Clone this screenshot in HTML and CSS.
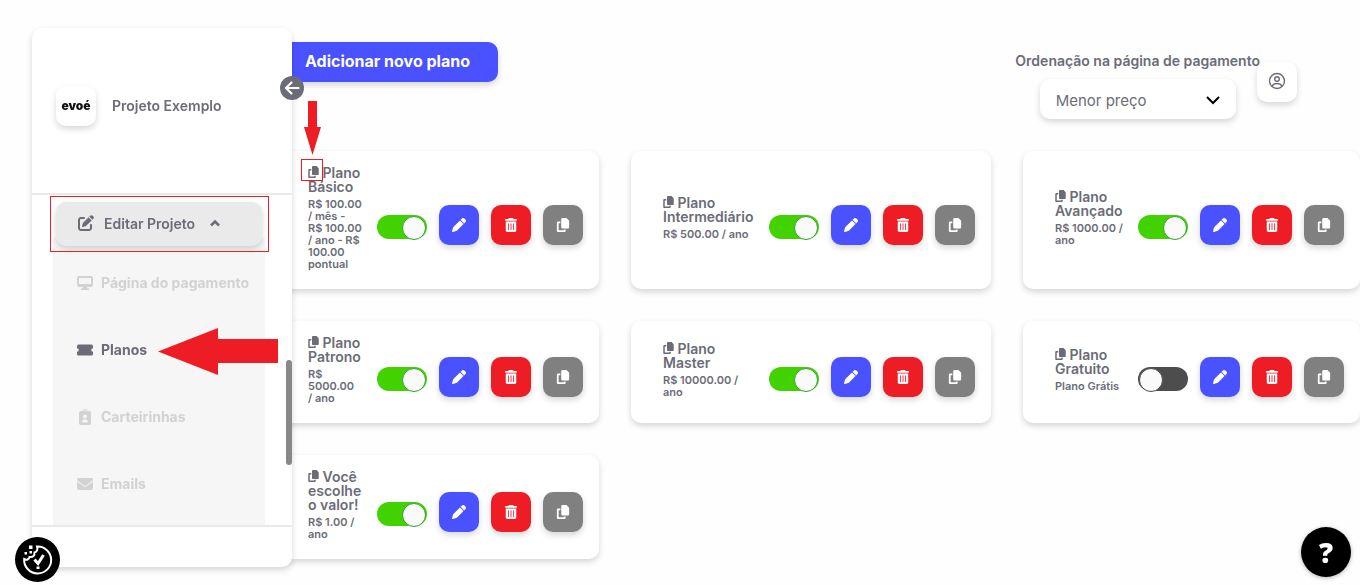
FILE: index.html
```html
<!DOCTYPE html>
<html lang="pt-BR">
<head>
  <meta charset="UTF-8">
  <meta name="viewport" content="width=device-width, initial-scale=1.0">
  <title>Planos</title>
  <link rel="stylesheet" href="styles.css">
</head>
<body>
  <!-- icones -->
  <svg class="sprite" aria-hidden="true">
    <symbol id="copy" viewBox="0 0 448 512"><path d="M208 0L332.1 0c12.7 0 24.9 5.1 33.9 14.1l67.9 67.9c9 9 14.1 21.2 14.1 33.9L448 336c0 26.5-21.5 48-48 48l-192 0c-26.5 0-48-21.5-48-48l0-288c0-26.5 21.5-48 48-48zM48 128l80 0 0 64-64 0 0 256 192 0 0-32 64 0 0 48c0 26.5-21.5 48-48 48L48 512c-26.5 0-48-21.5-48-48L0 176c0-26.5 21.5-48 48-48z"/></symbol>
    <symbol id="pen" viewBox="0 0 512 512"><path d="M362.7 19.3L314.3 67.7 444.3 197.7l48.4-48.4c25-25 25-65.5 0-90.5L453.3 19.3c-25-25-65.5-25-90.5 0zm-71 71L58.6 323.5c-10.4 10.4-18 23.3-22.2 37.4L1 481.2C-1.5 489.7 .8 498.8 7 505s15.3 8.5 23.7 6.1l120.3-35.4c14.1-4.2 27-11.8 37.4-22.2L421.7 220.3 291.7 90.3z"/></symbol>
    <symbol id="trash" viewBox="0 0 448 512"><path d="M135.2 17.7C140.6 6.8 151.7 0 163.8 0H284.2c12.1 0 23.2 6.8 28.6 17.7L320 32h96c17.7 0 32 14.3 32 32s-14.3 32-32 32H32C14.3 96 0 81.7 0 64S14.3 32 32 32h96l7.2-14.3zM32 128H416V448c0 35.3-28.7 64-64 64H96c-35.3 0-64-28.7-64-64V128zm96 64c-8.8 0-16 7.2-16 16V432c0 8.8 7.2 16 16 16s16-7.2 16-16V208c0-8.8-7.2-16-16-16zm96 0c-8.8 0-16 7.2-16 16V432c0 8.8 7.2 16 16 16s16-7.2 16-16V208c0-8.8-7.2-16-16-16zm96 0c-8.8 0-16 7.2-16 16V432c0 8.8 7.2 16 16 16s16-7.2 16-16V208c0-8.8-7.2-16-16-16z"/></symbol>
    <symbol id="edit" viewBox="0 0 512 512"><path d="M471.6 21.7c-21.9-21.9-57.3-21.9-79.2 0L362.3 51.7l97.9 97.9 30.1-30.1c21.9-21.9 21.9-57.3 0-79.2L471.6 21.7zm-299.2 220c-6.1 6.1-10.8 13.6-13.5 21.9l-29.6 88.8c-2.9 8.6-.6 18.1 5.8 24.6s15.9 8.7 24.6 5.8l88.8-29.6c8.2-2.7 15.7-7.4 21.9-13.5L437.7 172.3 339.7 74.3 172.4 241.7zM96 64C43 64 0 107 0 160V416c0 53 43 96 96 96H352c53 0 96-43 96-96V320c0-17.7-14.3-32-32-32s-32 14.3-32 32v96c0 17.7-14.3 32-32 32H96c-17.7 0-32-14.3-32-32V160c0-17.7 14.3-32 32-32h96c17.7 0 32-14.3 32-32s-14.3-32-32-32H96z"/></symbol>
    <symbol id="display" viewBox="0 0 16 16"><path fill-rule="evenodd" d="M2 1h12a2 2 0 0 1 2 2v7a2 2 0 0 1-2 2h-4l.4 1.500H11.500a.7.7 0 0 1 0 1.500h-7a.7.7 0 0 1 0-1.500H5.600L6 12H2a2 2 0 0 1-2-2V3a2 2 0 0 1 2-2zm0 2v6h12V3z"/></symbol>
    <symbol id="ticket" viewBox="0 0 16 16"><path d="M1.500 2.500h13A1.500 1.500 0 0 1 16 4v2.200a1.500 1.500 0 0 0 0 3.600V12a1.500 1.500 0 0 1-1.500 1.500h-13A1.500 1.500 0 0 1 0 12V9.800a1.500 1.500 0 0 0 0-3.600V4A1.500 1.500 0 0 1 1.500 2.500z"/></symbol>
    <symbol id="badge" viewBox="0 0 16 16"><path fill-rule="evenodd" d="M4 2h2a2 2 0 0 1 4 0h2a2 2 0 0 1 2 2v10a2 2 0 0 1-2 2H4a2 2 0 0 1-2-2V4a2 2 0 0 1 2-2zm4-1a.8.8 0 1 0 0 1.600A.8.8 0 0 0 8 1zm0 4.500a2 2 0 1 0 0 4 2 2 0 0 0 0-4zM5 13.500h6c0-2-1-3-2.200-3H7.200C6 10.500 5 11.500 5 13.500z"/></symbol>
    <symbol id="mail" viewBox="0 0 512 512"><path d="M48 64C21.5 64 0 85.500 0 112c0 15.1 7.1 29.3 19.2 38.4L236.8 313.600c11.4 8.5 27 8.5 38.4 0L492.8 150.4c12.1-9.1 19.2-23.3 19.2-38.4c0-26.5-21.5-48-48-48H48zM0 176V384c0 35.3 28.7 64 64 64H448c35.3 0 64-28.7 64-64V176L294.4 339.2c-22.8 17.1-54 17.1-76.8 0L0 176z"/></symbol>
  </svg>

  <aside class="sidebar">
    <div class="project">
      <div class="logo">evoé</div>
      <span>Projeto Exemplo</span>
    </div>
    <nav class="menu">
      <button class="menu-toggle" type="button">
        <svg class="icon"><use href="#edit"/></svg>
        Editar Projeto
        <svg class="caret" viewBox="0 0 12 8"><path d="M2 6.500L6 2.500l4 4"/></svg>
      </button>
      <div class="submenu">
        <a href="#"><svg class="icon"><use href="#display"/></svg>Página do pagamento</a>
        <a href="#" class="active"><svg class="icon"><use href="#ticket"/></svg>Planos</a>
        <a href="#"><svg class="icon"><use href="#badge"/></svg>Carteirinhas</a>
        <a href="#"><svg class="icon"><use href="#mail"/></svg>Emails</a>
      </div>
    </nav>
    <div class="sidebar-footer"></div>
    <div class="scroll-thumb"></div>
    <button class="collapse" type="button" aria-label="Recolher menu">
      <svg viewBox="0 0 24 24"><path d="M18.500 12H6M11.500 6.500L6 12l5.500 5.500"/></svg>
    </button>
  </aside>

  <main class="content">
    <header class="toolbar">
      <button class="add-plan" type="button">Adicionar novo plano</button>
      <div class="order">
        <label for="ordem">Ordenação na página de pagamento</label>
        <div class="select-box">
          <select id="ordem">
            <option>Menor preço</option>
            <option>Maior preço</option>
          </select>
          <svg viewBox="0 0 14 9"><path d="M1 1l6 6 6-6"/></svg>
        </div>
      </div>
    </header>

    <section class="plans">
      <article class="card">
        <div class="info">
          <h2><svg><use href="#copy"/></svg> Plano<br>Básico</h2>
          <p>R$ 100.00<br>/ mês -<br>R$ 100.00<br>/ ano - R$<br>100.00<br>pontual</p>
        </div>
        <div class="actions">
          <input type="checkbox" class="switch" aria-label="Ativar Plano Básico" checked>
          <button class="btn edit" aria-label="Editar"><svg><use href="#pen"/></svg></button>
          <button class="btn delete" aria-label="Excluir"><svg><use href="#trash"/></svg></button>
          <button class="btn copy" aria-label="Copiar"><svg><use href="#copy"/></svg></button>
        </div>
      </article>

      <article class="card">
        <div class="info">
          <h2><svg><use href="#copy"/></svg> Plano<br>Intermediário</h2>
          <p>R$ 500.00 / ano</p>
        </div>
        <div class="actions">
          <input type="checkbox" class="switch" aria-label="Ativar Plano Intermediário" checked>
          <button class="btn edit" aria-label="Editar"><svg><use href="#pen"/></svg></button>
          <button class="btn delete" aria-label="Excluir"><svg><use href="#trash"/></svg></button>
          <button class="btn copy" aria-label="Copiar"><svg><use href="#copy"/></svg></button>
        </div>
      </article>

      <article class="card">
        <div class="info">
          <h2><svg><use href="#copy"/></svg> Plano<br>Avançado</h2>
          <p>R$ 1000.00 /<br>ano</p>
        </div>
        <div class="actions">
          <input type="checkbox" class="switch" aria-label="Ativar Plano Avançado" checked>
          <button class="btn edit" aria-label="Editar"><svg><use href="#pen"/></svg></button>
          <button class="btn delete" aria-label="Excluir"><svg><use href="#trash"/></svg></button>
          <button class="btn copy" aria-label="Copiar"><svg><use href="#copy"/></svg></button>
        </div>
      </article>

      <article class="card">
        <div class="info">
          <h2><svg><use href="#copy"/></svg> Plano<br>Patrono</h2>
          <p>R$<br>5000.00<br>/ ano</p>
        </div>
        <div class="actions">
          <input type="checkbox" class="switch" aria-label="Ativar Plano Patrono" checked>
          <button class="btn edit" aria-label="Editar"><svg><use href="#pen"/></svg></button>
          <button class="btn delete" aria-label="Excluir"><svg><use href="#trash"/></svg></button>
          <button class="btn copy" aria-label="Copiar"><svg><use href="#copy"/></svg></button>
        </div>
      </article>

      <article class="card">
        <div class="info">
          <h2><svg><use href="#copy"/></svg> Plano<br>Master</h2>
          <p>R$ 10000.00 /<br>ano</p>
        </div>
        <div class="actions">
          <input type="checkbox" class="switch" aria-label="Ativar Plano Master" checked>
          <button class="btn edit" aria-label="Editar"><svg><use href="#pen"/></svg></button>
          <button class="btn delete" aria-label="Excluir"><svg><use href="#trash"/></svg></button>
          <button class="btn copy" aria-label="Copiar"><svg><use href="#copy"/></svg></button>
        </div>
      </article>

      <article class="card">
        <div class="info">
          <h2><svg><use href="#copy"/></svg> Plano<br>Gratuito</h2>
          <p>Plano Grátis</p>
        </div>
        <div class="actions">
          <input type="checkbox" class="switch" aria-label="Ativar Plano Gratuito">
          <button class="btn edit" aria-label="Editar"><svg><use href="#pen"/></svg></button>
          <button class="btn delete" aria-label="Excluir"><svg><use href="#trash"/></svg></button>
          <button class="btn copy" aria-label="Copiar"><svg><use href="#copy"/></svg></button>
        </div>
      </article>

      <article class="card">
        <div class="info">
          <h2><svg><use href="#copy"/></svg> Você<br>escolhe<br>o valor!</h2>
          <p>R$ 1.00 /<br>ano</p>
        </div>
        <div class="actions">
          <input type="checkbox" class="switch" aria-label="Ativar Você escolhe o valor!" checked>
          <button class="btn edit" aria-label="Editar"><svg><use href="#pen"/></svg></button>
          <button class="btn delete" aria-label="Excluir"><svg><use href="#trash"/></svg></button>
          <button class="btn copy" aria-label="Copiar"><svg><use href="#copy"/></svg></button>
        </div>
      </article>
    </section>
  </main>

  <button class="user" type="button" aria-label="Conta">
    <svg viewBox="0 0 18 18"><circle cx="9" cy="9" r="7.500"/><circle cx="9" cy="7" r="2.300"/><path d="M4 14.300c1.200-2.400 2.800-2.800 5-2.800s3.800.4 5 2.800"/></svg>
  </button>

  <button class="cookies" type="button" aria-label="Cookies">
    <svg viewBox="0 0 45 45">
      <path d="M22 9.500a13.500 13.500 0 1 1-12.800 12.500c2.500 1.300 5 .6 5.300-2 3.500.5 5.500-1.500 5-4.500 2.500-.5 3.500-3 2.500-6z"/>
      <path class="check" d="M19.500 22.500l3.500 4 5.500-8.500"/>
      <path class="dots" d="M14 8.500h3.500V12H14zM9.500 15H12v2.500H9.500zM14.500 14H17v2.500h-2.500zM21.500 29.500h3v2.500h-3z"/>
    </svg>
  </button>
  <button class="help" type="button" aria-label="Ajuda">?</button>

  <!-- marcacoes do tutorial -->
  <div class="mark mark-menu"></div>
  <div class="mark mark-copy"></div>
  <svg class="arrow arrow-down" viewBox="0 0 17 54"><path d="M4 0h9v26h4L8.500 54 0 26h4z"/></svg>
  <svg class="arrow arrow-left" viewBox="0 0 120 47"><path d="M0 23.500L60 0v11h60v24H60v12z"/></svg>
</body>
</html>
```

FILE: styles.css
```css
* {
  box-sizing: border-box;
}

body {
  margin: 0;
  background-color: #fefefe;
  color: #6b6c78;
  font-family: Inter, "Liberation Sans", sans-serif;
  font-size: 14px;
  font-weight: 600;
}

button, select {
  font-family: inherit;
  border: none;
  cursor: pointer;
}

.sprite {
  display: none;
}

.icon {
  width: 16px;
  height: 16px;
  fill: currentColor;
}

/* Menu lateral */
.sidebar {
  position: fixed;
  top: 28px;
  bottom: 18px;
  left: 32px;
  width: 260px;
  display: flex;
  flex-direction: column;
  background-color: #fff;
  border-radius: 10px;
  box-shadow: 0 3px 6px rgba(0,0,0,0.16);
  z-index: 2;
}

.project {
  height: 167px;
  flex-shrink: 0;
  display: flex;
  align-items: center;
  gap: 16px;
  padding: 0 24px 10px;
  border-bottom: 2px solid #e9e9e9;
}

.logo {
  width: 40px;
  height: 40px;
  border-radius: 10px;
  box-shadow: 0 3px 6px rgba(0,0,0,0.16);
  color: #111;
  font-size: 12px;
  font-weight: 900;
  line-height: 40px;
  text-align: center;
}

.menu {
  flex: 1;
  min-height: 0;
  display: flex;
  flex-direction: column;
  overflow: hidden;
  padding: 7px 27px 0 21px;
}

.menu-toggle {
  position: relative;
  height: 44px;
  flex-shrink: 0;
  margin: 0 3px;
  padding: 0 22px 2px;
  display: flex;
  align-items: center;
  gap: 10px;
  background-color: #eaeaea;
  border-radius: 10px;
  box-shadow: 0 3px 6px rgba(0,0,0,0.16);
  color: #6b6c78;
  font-size: 14px;
  font-weight: 600;
}

.caret {
  width: 12px;
  height: 8px;
  margin-left: 4px;
  fill: none;
  stroke: currentColor;
  stroke-width: 2.5;
}

.submenu {
  flex: 1;
  display: flex;
  flex-direction: column;
  margin-top: -8px;
  padding-top: 11px;
  background-color: #f6f6f6;
}

.submenu a {
  height: 67px;
  flex-shrink: 0;
  display: flex;
  align-items: center;
  gap: 8px;
  padding-left: 24px;
  color: #d2d2d2;
  font-weight: 700;
  text-decoration: none;
}

.submenu a.active {
  color: #6b6c78;
}

.sidebar-footer {
  height: 42px;
  flex-shrink: 0;
  border-top: 2px solid #e9e9e9;
}

.scroll-thumb {
  position: absolute;
  right: 0;
  top: 332px;
  width: 6px;
  height: 105px;
  border-radius: 3px;
  background-color: #888;
}

.collapse {
  position: absolute;
  top: 48px;
  right: -12px;
  width: 24px;
  height: 24px;
  padding: 0;
  border-radius: 50%;
  background-color: #6b6c78;
}

.collapse svg {
  display: block;
  fill: none;
  stroke: #fff;
  stroke-width: 2.2;
  stroke-linecap: round;
  stroke-linejoin: round;
}

/* Conteudo */
.content {
  margin-left: 276px;
  padding: 42px 0 16px;
}

.toolbar {
  display: flex;
  align-items: flex-start;
  justify-content: space-between;
  padding-right: 100px;
}

.add-plan {
  height: 40px;
  padding: 0 28px 2px 29px;
  border-radius: 10px;
  background-color: #4a52ff;
  box-shadow: 0 3px 6px rgba(0,0,0,0.16);
  color: #fff;
  font-size: 16px;
  font-weight: 700;
}

.order {
  display: flex;
  flex-direction: column;
  align-items: center;
  gap: 9px;
  padding-top: 9px;
}

.order label {
  line-height: 19px;
}

.select-box {
  position: relative;
  width: 196px;
}

.select-box select {
  appearance: none;
  display: block;
  width: 100%;
  height: 40px;
  padding: 2px 16px 0;
  border-radius: 10px;
  background-color: #fff;
  box-shadow: 0 3px 6px rgba(0,0,0,0.16);
  color: #6b6c78;
  font-size: 15px;
}

.select-box svg {
  position: absolute;
  right: 16px;
  top: 17px;
  width: 14px;
  height: 9px;
  fill: none;
  stroke: #000;
  stroke-width: 2;
  pointer-events: none;
}

.plans {
  display: grid;
  grid-template-columns: 323fr 360fr 337fr;
  gap: 32px;
  margin-top: 32px;
}

.card {
  display: flex;
  align-items: center;
  justify-content: space-between;
  padding: 15px 16px 17px 32px;
  border-radius: 10px;
  background-color: #fff;
  box-shadow: 0 3px 6px rgba(0,0,0,0.16);
}

.info {
  white-space: nowrap;
}

.info h2 {
  margin: 0 0 4px;
  font-size: 14px;
  font-weight: 600;
  line-height: 14px;
}

.info h2 svg {
  width: 11px;
  height: 12px;
  vertical-align: top;
  fill: currentColor;
}

.info p {
  margin: 0 0 2px;
  font-size: 11px;
  line-height: 12px;
}

.actions {
  display: flex;
  align-items: center;
  gap: 12px;
  padding-top: 12px;
}

.btn {
  width: 40px;
  height: 40px;
  padding: 0;
  display: flex;
  align-items: center;
  justify-content: center;
  border-radius: 10px;
  box-shadow: 0 3px 6px rgba(0,0,0,0.16);
}

.btn svg {
  width: 14px;
  height: 14px;
  fill: #fff;
}

.edit {
  background-color: #4a52ff;
}

.delete {
  background-color: #ee1c25;
}

.copy {
  background-color: #808080;
}

.switch {
  appearance: none;
  width: 50px;
  height: 24px;
  margin: 4px 0 0;
  padding: 1px;
  display: flex;
  border-radius: 12px;
  background-color: #4d4d4d;
  cursor: pointer;
}

.switch::before {
  content: "";
  width: 22px;
  height: 22px;
  border: 1px solid #4d4d4d;
  border-radius: 50%;
  background-color: #fafafa;
}

.switch:checked {
  justify-content: flex-end;
  background-color: #42d200;
}

.switch:checked::before {
  border-color: #2aa52a;
}

/* Botoes flutuantes */
.user {
  position: absolute;
  top: 62px;
  right: 63px;
  width: 40px;
  height: 40px;
  padding: 0 0 2px;
  display: flex;
  align-items: center;
  justify-content: center;
  border-radius: 10px;
  background-color: #fff;
  box-shadow: 0 3px 6px rgba(0,0,0,0.16);
}

.user svg {
  width: 18px;
  height: 18px;
  fill: none;
  stroke: #6b6c78;
  stroke-width: 1.4;
}

.cookies {
  position: fixed;
  left: 15px;
  bottom: 3px;
  width: 45px;
  height: 45px;
  padding: 0;
  border-radius: 50%;
  background-color: #000;
  z-index: 3;
}

.cookies svg {
  display: block;
  fill: none;
  stroke: #fff;
  stroke-width: 2;
}

.cookies .check {
  stroke-width: 3;
}

.cookies .dots {
  fill: #fff;
  stroke: none;
}

.help {
  position: fixed;
  right: 9px;
  bottom: 8px;
  width: 50px;
  height: 50px;
  padding: 0;
  border-radius: 50%;
  background-color: #000;
  box-shadow: 0 1px 4px rgba(0,0,0,0.3);
  color: #fff;
  font-family: "Open Sans", sans-serif;
  font-size: 28px;
  font-weight: 800;
}

/* Marcacoes */
.mark {
  position: absolute;
  border: 1px solid #ee1c25;
  z-index: 4;
}

.mark-menu {
  left: 50px;
  top: 196px;
  width: 219px;
  height: 56px;
}

.mark-copy {
  left: 301px;
  top: 159px;
  width: 22px;
  height: 22px;
}

.arrow {
  position: absolute;
  fill: #ee1c25;
  z-index: 4;
}

.arrow-down {
  left: 304px;
  top: 101px;
  width: 17px;
  height: 54px;
}

.arrow-left {
  left: 158px;
  top: 328px;
  width: 120px;
  height: 47px;
}
```
